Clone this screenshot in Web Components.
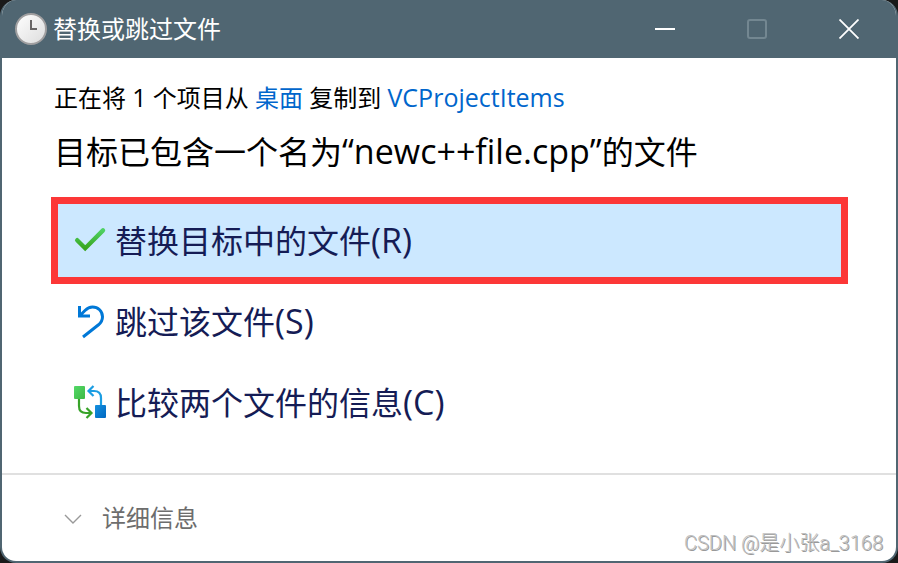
<!DOCTYPE html>
<html lang="zh-CN">
<head>
<meta charset="utf-8">
<meta name="viewport" content="width=device-width, initial-scale=1">
<title>替换或跳过文件</title>
<style>
    body {
        margin: 0;
        background: #1a1a1a;
        font-family: "Open Sans", "Noto Sans CJK SC", sans-serif;
    }
    a {
        color: #0066cc;
        text-decoration: none;
    }
    .folder {
        font-size: 25px;
        line-height: 1;
    }
    .latin {
        font-size: 34px;
        line-height: 1;
    }
</style>
</head>
<body>
<dialog-window>
    <title-bar slot="title">替换或跳过文件</title-bar>
    <copy-summary>
        <span>正在将 <span class="folder">1</span> 个项目从 <a href="#desktop">桌面</a> 复制到 <a class="folder" href="#items">VCProjectItems</a></span>
        <span slot="heading">目标已包含一个名为<span class="latin">“newc++file.cpp”</span>的文件</span>
    </copy-summary>
    <command-list>
        <command-link icon="check" selected>替换目标中的文件<span class="latin">(R)</span></command-link>
        <command-link icon="undo">跳过该文件<span class="latin">(S)</span></command-link>
        <command-link icon="compare">比较两个文件的信息<span class="latin">(C)</span></command-link>
    </command-list>
    <details-toggle slot="footer">详细信息</details-toggle>
    <water-mark slot="mark">CSDN @是小张a_3168</water-mark>
</dialog-window>

<script>
class DialogWindow extends HTMLElement {
    constructor() {
        super();
        this.attachShadow({ mode: "open" });
        this.shadowRoot.innerHTML = `
            <style>
                :host {
                    display: flex;
                    flex-direction: column;
                    position: relative;
                    box-sizing: border-box;
                    min-height: 100vh;
                    border: 2px solid #506672;
                    border-top: 0;
                    border-radius: 16px;
                    overflow: hidden;
                    background: #fff;
                }
                main {
                    flex: 1;
                    padding: 20px 49px 32px;
                }
                footer {
                    border-top: 2px solid #e0e0e0;
                    padding: 24px 60px;
                }
            </style>
            <slot name="title"></slot>
            <main><slot></slot></main>
            <footer><slot name="footer"></slot></footer>
            <slot name="mark"></slot>
        `;
    }
}

class TitleBar extends HTMLElement {
    constructor() {
        super();
        this.attachShadow({ mode: "open" });
        this.shadowRoot.innerHTML = `
            <style>
                :host {
                    display: flex;
                    align-items: center;
                    height: 58px;
                    padding: 0 1px 0 12px;
                    background: #506672;
                    color: #fff;
                }
                .title {
                    flex: 1;
                    margin: 0 0 0 5px;
                    font-size: 24px;
                    font-weight: 400;
                    line-height: 36px;
                }
                button {
                    display: flex;
                    align-items: center;
                    justify-content: center;
                    width: 92px;
                    height: 58px;
                    border: 0;
                    padding: 0;
                    background: none;
                    color: inherit;
                }
            </style>
            <svg width="34" height="34" viewBox="0 0 34 34" aria-hidden="true">
                <defs>
                    <linearGradient id="face" x1="0" y1="0" x2="1" y2="1">
                        <stop offset="0" stop-color="#fff"/>
                        <stop offset="1" stop-color="#dcdcdc"/>
                    </linearGradient>
                </defs>
                <circle cx="17" cy="17" r="15" fill="url(#face)" stroke="#a09fa0" stroke-width="2"/>
                <path d="M17 8v9h6" fill="none" stroke="#686565" stroke-width="2"/>
            </svg>
            <h1 class="title"><slot></slot></h1>
            <button aria-label="最小化">
                <svg width="20" height="20" viewBox="0 0 20 20"><path d="M0 10h20" stroke="#fff" stroke-width="2"/></svg>
            </button>
            <button aria-label="最大化" disabled>
                <svg width="20" height="20" viewBox="0 0 20 20"><rect x="1" y="1" width="18" height="18" rx="2" fill="none" stroke="#738791" stroke-width="2"/></svg>
            </button>
            <button aria-label="关闭">
                <svg width="20" height="20" viewBox="0 0 20 20"><path d="M0.5 0.5l19 19M19.5 0.5l-19 19" stroke="#fff" stroke-width="1.8"/></svg>
            </button>
        `;
    }
}

class CopySummary extends HTMLElement {
    constructor() {
        super();
        this.attachShadow({ mode: "open" });
        this.shadowRoot.innerHTML = `
            <style>
                :host {
                    display: block;
                    padding: 0 3px;
                    color: #000;
                }
                p {
                    margin: 0;
                    font-size: 24px;
                    line-height: 40px;
                }
                h2 {
                    margin: 8px 0 0;
                    font-size: 32px;
                    font-weight: 400;
                    line-height: 52px;
                }
            </style>
            <p><slot></slot></p>
            <h2><slot name="heading"></slot></h2>
        `;
    }
}

class CommandList extends HTMLElement {
    constructor() {
        super();
        this.attachShadow({ mode: "open" });
        this.shadowRoot.innerHTML = `
            <style>
                :host {
                    display: flex;
                    flex-direction: column;
                    gap: 8px;
                    margin: 26px 6px 0 7px;
                }
            </style>
            <slot></slot>
        `;
    }
}

const ICONS = {
    check: `
        <defs>
            <linearGradient id="green" x1="0" y1="0" x2="0" y2="1">
                <stop offset="0" stop-color="#4fd163"/>
                <stop offset="1" stop-color="#38a51e"/>
            </linearGradient>
        </defs>
        <path d="M3.2 15.2L11.2 23.2L29 5.4" fill="none" stroke="url(#green)" stroke-width="4.4" stroke-linecap="round"/>`,
    undo: `
        <path d="M5.5 0V10H16M5.5 10L11 4.5C13.5 2 16 1 18.5 1C24 1 28.5 5.2 28.5 10.7C28.5 14 27 16.6 24.5 18.8L9 31" fill="none" stroke="#0078d7" stroke-width="3"/>`,
    compare: `
        <defs>
            <linearGradient id="leaf" x1="0" y1="0" x2="1" y2="1">
                <stop offset="0" stop-color="#53d868"/>
                <stop offset="1" stop-color="#3fb944"/>
            </linearGradient>
            <linearGradient id="sea" x1="0" y1="0" x2="1" y2="1">
                <stop offset="0" stop-color="#1490df"/>
                <stop offset="1" stop-color="#0067c0"/>
            </linearGradient>
        </defs>
        <path d="M5 11V19Q5 26 12 26H17M12.5 21L17.5 26L12.5 31" fill="none" stroke="#38a329" stroke-width="2.2"/>
        <path d="M27 19V11Q27 4 20 4H15M19.5 -1L14.5 4L19.5 9" fill="none" stroke="#1b9de2" stroke-width="2.2"/>
        <rect y="-1" width="11" height="13" rx="1" fill="url(#leaf)"/>
        <rect x="21" y="18" width="11" height="13" rx="1" fill="url(#sea)"/>`
};

class CommandLink extends HTMLElement {
    constructor() {
        super();
        this.attachShadow({ mode: "open" });

        const icon = ICONS[this.getAttribute("icon")];

        this.shadowRoot.innerHTML = `
            <style>
                :host {
                    display: block;
                }
                :host([selected]) {
                    background: #cce8ff;
                    outline: 7px solid #fc3737;
                }
                button {
                    display: flex;
                    align-items: center;
                    gap: 9px;
                    width: 100%;
                    height: 73px;
                    border: 0;
                    padding: 0 16px;
                    background: none;
                    color: #151c55;
                    font: inherit;
                    font-size: 32px;
                    line-height: 48px;
                    text-align: left;
                }
                svg {
                    flex: none;
                    overflow: visible;
                }
            </style>
            <button>
                <svg width="32" height="32" viewBox="0 0 32 32" aria-hidden="true">${icon}</svg>
                <span><slot></slot></span>
            </button>
        `;
    }
}

class DetailsToggle extends HTMLElement {
    constructor() {
        super();
        this.attachShadow({ mode: "open" });
        this.shadowRoot.innerHTML = `
            <style>
                :host {
                    display: block;
                }
                button {
                    display: flex;
                    align-items: center;
                    gap: 20px;
                    border: 0;
                    padding: 0;
                    background: none;
                    color: #6d6d6d;
                    font: inherit;
                    font-size: 24px;
                    line-height: 38px;
                }
            </style>
            <button aria-expanded="false">
                <svg width="20" height="20" viewBox="0 0 20 20" aria-hidden="true"><path d="M3 7l8 8l8-8" fill="none" stroke="#999" stroke-width="1.4"/></svg>
                <span><slot></slot></span>
            </button>
        `;
    }
}

class WaterMark extends HTMLElement {
    constructor() {
        super();
        this.attachShadow({ mode: "open" });
        this.shadowRoot.innerHTML = `
            <style>
                :host {
                    position: absolute;
                    right: 13px;
                    bottom: 4px;
                    color: #c0c0c0;
                    font-family: Roboto, "Noto Sans CJK SC", sans-serif;
                    font-size: 20px;
                    font-weight: 300;
                    line-height: 28px;
                    text-shadow: 1px 1px 0 #999;
                    pointer-events: none;
                }
            </style>
            <slot></slot>
        `;
    }
}

customElements.define("dialog-window", DialogWindow);
customElements.define("title-bar", TitleBar);
customElements.define("copy-summary", CopySummary);
customElements.define("command-list", CommandList);
customElements.define("command-link", CommandLink);
customElements.define("details-toggle", DetailsToggle);
customElements.define("water-mark", WaterMark);
</script>
</body>
</html>
